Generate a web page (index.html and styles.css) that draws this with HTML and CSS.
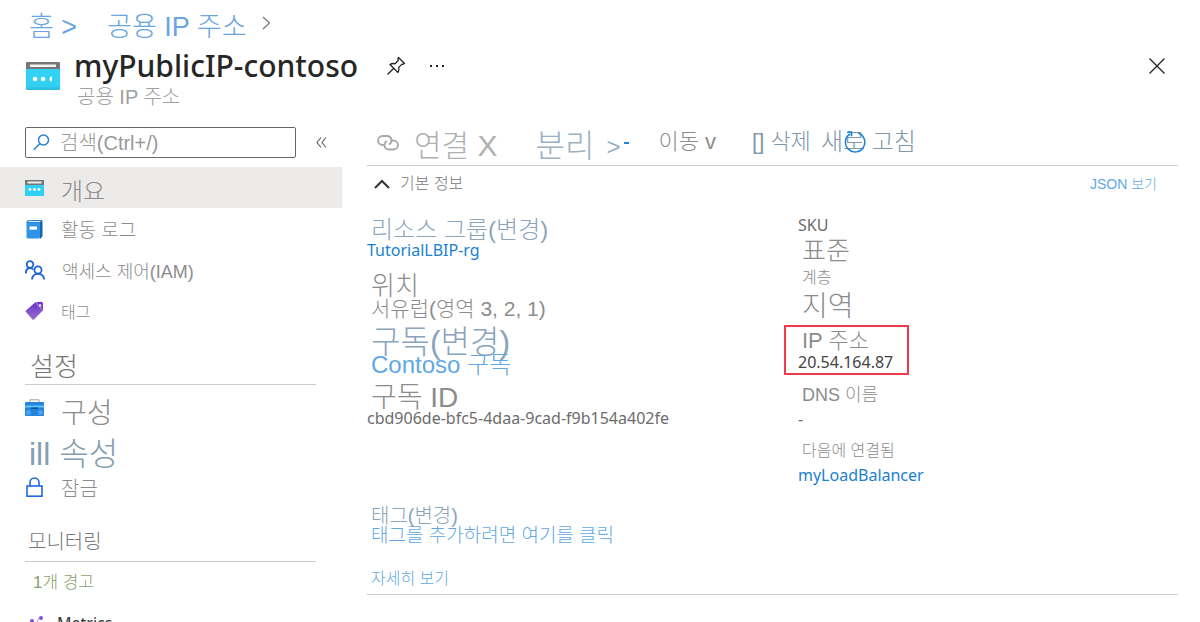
FILE: index.html
```html
<!DOCTYPE html>
<html lang="ko">
<head>
<meta charset="utf-8">
<title>myPublicIP-contoso</title>
<link rel="stylesheet" href="styles.css">
</head>
<body>
<div class="page">
  <header class="header">
    <nav class="crumbs t27">
      <a href="#">홈 &gt;</a>
      <a href="#">공용 IP 주소</a>
      <svg class="crumb-arrow" width="9" height="14" viewBox="0 0 9 14"><path d="M1 1l6.500 6L1 13" fill="none" stroke="#777" stroke-width="1.200"/></svg>
    </nav>
    <div class="title-row">
      <svg class="res-icon" width="34" height="28" viewBox="0 0 34 28"><defs><linearGradient id="cy" x1="0" y1="0" x2="0" y2="1"><stop offset="0" stop-color="#32d4f5"/><stop offset=".8" stop-color="#32d0f2"/><stop offset="1" stop-color="#2bb8da"/></linearGradient></defs><path d="M0 7h34v20a1 1 0 0 1-1 1H1a1 1 0 0 1-1-1z" fill="url(#cy)"/><path d="M1 0h32a1 1 0 0 1 1 1v6H0V1a1 1 0 0 1 1-1z" fill="#767676"/><rect x="4" y="2.500" width="26" height="2.500" fill="#f4f4f4"/><circle cx="9" cy="17" r="2.300" fill="#fff"/><circle cx="17" cy="17" r="2.300" fill="#fff"/><path d="M26 14.500a2.500 2.500 0 1 0 0 5z" fill="#fff"/></svg>
      <div class="titles">
        <h1>myPublicIP-contoso</h1>
        <p class="subtitle t20">공용 IP 주소</p>
      </div>
      <button class="icon-btn pin" aria-label="고정"><svg width="20" height="20" viewBox="0 0 20 20" fill="none" stroke="#222" stroke-width="1.300" stroke-linejoin="round"><path d="M12.500 1.500l6 6-1.500.800-1-.200-3.300 3.300c.5 1.800.3 3.600-.7 5.100L4 8.500c1.500-1 3.300-1.200 5-.700l3.200-3.300-.300-1.400zM7.500 12.500L1.500 18.500"/></svg></button>
      <button class="icon-btn more" aria-label="더 보기"><svg width="14" height="4" viewBox="0 0 14 4" fill="#222"><path d="M0 1h2v2H0zM6 1h2v2H6zM12 1h2v2h-2z"/></svg></button>
      <button class="icon-btn close" aria-label="닫기"><svg width="16" height="16" viewBox="0 0 16 16"><path d="M.5.500l15 15M15.500.500l-15 15" stroke="#222" stroke-width="1.300"/></svg></button>
    </div>
  </header>

  <aside class="side">
    <div class="search-row">
      <label class="search">
        <svg width="17" height="17" viewBox="0 0 17 17" fill="none" stroke="#2a7fd0" stroke-width="1.500"><circle cx="10.500" cy="6" r="5"/><path d="M7 9.500L.8 15.800"/></svg>
        <input class="t20" type="text" aria-label="검색" placeholder="검색(Ctrl+/)">
      </label>
      <button class="icon-btn collapse" aria-label="접기"><svg width="11" height="11" viewBox="0 0 11 11" fill="none" stroke="#666" stroke-width="1.200"><path d="M5 .5l-4 5 4 5M10 .5l-4 5 4 5"/></svg></button>
    </div>
    <ul class="nav">
      <li><a class="item active t24" href="#"><svg width="19" height="16" viewBox="0 0 19 16"><path d="M0 4h19v12H0z" fill="#2fd0f1"/><path d="M0 0h19v5H0z" fill="#767676"/><path d="M2.500 1.500h14v2h-14z" fill="#eee"/><g fill="#fff"><circle cx="5" cy="9.500" r="1.400"/><circle cx="9.500" cy="9.500" r="1.400"/><circle cx="14" cy="9.500" r="1.400"/></g></svg><span>개요</span></a></li>
      <li><a class="item t19" href="#"><svg width="19" height="20" viewBox="0 0 19 20"><path d="M3 1h13a1.500 1.500 0 0 1 1.500 1.500v15L15 20V3z" fill="#1565ab"/><rect x="1.500" y="2.500" width="13.500" height="17" rx="1.500" fill="#2f94e4"/><path d="M1.500 4A2.500 2.500 0 0 1 4 1.200h12.500L15 3.500H2z" fill="#2c80c8"/><path d="M4 2h12l-1 1H3z" fill="#dfe9f2"/><rect x="4.500" y="7.500" width="7.500" height="3.200" fill="#fff"/></svg>활동 로그</a></li>
      <li><a class="item t18" href="#"><svg width="20" height="20" viewBox="0 0 20 20" fill="none" stroke="#1b64d8" stroke-width="1.800"><circle cx="5" cy="4.500" r="3.300"/><path d="M.900 13.500C.900 10 2.500 8 5 8c1.500 0 2.500.600 3.300 1.500"/><circle cx="13" cy="10" r="3.600"/><path d="M7 19.500c.3-3.500 2.500-5.700 6-5.700s5.800 2.200 6.200 5.700"/></svg>액세스 제어(IAM)</a></li>
      <li><a class="item t16" href="#"><svg width="19" height="19" viewBox="0 0 19 19"><defs><linearGradient id="pu" x1="0" y1="0" x2="0" y2="1"><stop offset="0" stop-color="#6d2fd0"/><stop offset="1" stop-color="#9a70c8"/></linearGradient></defs><path d="M10 1.500L16 .800a2 2 0 0 1 2 2v6.500l-9 9.200a1 1 0 0 1-1.500 0L1 11a1 1 0 0 1 0-1.400z" fill="url(#pu)"/><path d="M10.500 1.500l6.500 7" stroke="#b795e6"/><circle cx="15" cy="4.500" r="1.400" fill="#d9c6f2"/></svg>태그</a></li>
    </ul>
    <h2 class="section t26">설정</h2>
    <ul class="nav settings">
      <li><a class="item config t28" href="#"><svg width="19" height="17" viewBox="0 0 19 17"><path d="M5 4V1.500A1 1 0 0 1 6 .800h7a1 1 0 0 1 1 .700V4" fill="none" stroke="#bbb" stroke-width="1.500"/><rect y="3" width="19" height="14" rx="1" fill="#2585dc"/><path d="M0 6.500h19v2H0z" fill="#5fc2fa"/><path d="M6 8.500h7v1.500H6z" fill="#0b5192"/><circle cx="3.500" cy="13.500" r="2.500" fill="#4ba3ee"/><circle cx="15.500" cy="13.500" r="2.500" fill="#4ba3ee"/></svg>구성</a></li>
      <li><a class="item props t32" href="#">ill 속성</a></li>
      <li><a class="item lock t20" href="#"><svg width="19" height="20" viewBox="0 0 19 20" fill="none" stroke="#1f6ae0" stroke-width="1.600"><rect x="2" y="9" width="15" height="10.200"/><path d="M5 9V5.500C5 3 6.800 1 9.500 1S14 3 14 5.500V9"/></svg>잠금</a></li>
    </ul>
    <h2 class="section monitor t20">모니터링</h2>
    <ul class="nav monitoring">
      <li><a class="item alert t17" href="#">1개 경고</a></li>
      <li><a class="item metrics t16" href="#"><svg width="19" height="18" viewBox="0 0 19 18"><path d="M7 8l3 4 4-8" fill="none" stroke="#b58cf0"/><g fill="#8b49e8"><circle cx="7" cy="7" r="2"/><circle cx="16" cy="4" r="2"/><circle cx="10" cy="13" r="2"/></g></svg>Metrics</a></li>
    </ul>
  </aside>

  <main class="main">
    <div class="toolbar">
      <button class="tool attach t30"><svg width="22" height="16" viewBox="0 0 22 16" fill="none" stroke="#aaa" stroke-width="1.900"><path d="M8 10H5.500a4.500 4.500 0 0 1 0-9h5a4.500 4.500 0 0 1 1.500 8.500"/><path d="M14 5.500h2.500a4.500 4.500 0 0 1 0 9h-5a4.500 4.500 0 0 1-1.500-8.500"/></svg>연결 X</button>
      <button class="tool detach t32">분리</button>
      <button class="tool into t24">&gt;<span class="dash"></span></button>
      <button class="tool move t22">이동 <span>v</span></button>
      <button class="tool remove t22">[] 삭제</button>
      <button class="tool refresh t24">새로 고침<svg class="spin" width="22" height="22" viewBox="0 0 22 22" fill="none" stroke="#1a84d8" stroke-width="1.500"><path d="M6 3A9.700 9.700 0 1 0 14 2"/><path d="M3.500 1.200h4v4" stroke-width="1.800"/></svg></button>
    </div>
    <div class="essentials">
      <button class="toggle t16"><svg width="16" height="10" viewBox="0 0 16 10"><path d="M1 9l7-7 7 7" fill="none" stroke="#333" stroke-width="2"/></svg>기본 정보</button>
      <a class="json t14" href="#">JSON 보기</a>
    </div>
    <div class="details">
      <dl class="left">
        <div><dt class="t24 slate">리소스 그룹(변경)</dt><dd><a class="latin" href="#">TutorialLBIP-rg</a></dd></div>
        <div><dt class="t26">위치</dt><dd class="t21">서유럽(영역 3, 2, 1)</dd></div>
        <div><dt class="t32 slate">구독(변경)</dt><dd class="t24"><a href="#">Contoso 구독</a></dd></div>
        <div><dt class="t28">구독 ID</dt><dd class="latin">cbd906de-bfc5-4daa-9cad-f9b154a402fe</dd></div>
      </dl>
      <dl class="right">
        <div><dt class="latin">SKU</dt><dd class="t26">표준</dd></div>
        <div><dt class="t16">계층</dt><dd class="t28">지역</dd></div>
        <div class="marked"><dt class="t22">IP 주소</dt><dd class="latin dark">20.54.164.87</dd></div>
        <div><dt class="t18">DNS 이름</dt><dd class="latin">-</dd></div>
        <div><dt class="t16">다음에 연결됨</dt><dd><a class="latin" href="#">myLoadBalancer</a></dd></div>
      </dl>
    </div>
    <div class="tags">
      <p class="t20 slate">태그(변경)</p>
      <a class="t19" href="#">태그를 추가하려면 여기를 클릭</a>
    </div>
    <a class="see-more t16" href="#">자세히 보기</a>
  </main>
</div>
</body>
</html>
```
FILE: styles.css
```css
* { box-sizing: border-box; }
body, h1, h2, p, ul, dl, dt, dd { margin: 0; padding: 0; font-weight: 300; }
body {
  background: #fff;
  color: #8c8c8c;
  font-family: "Liberation Sans", "Noto Sans CJK KR", sans-serif;
}
ul { list-style: none; }
a { color: #5fa8e4; text-decoration: none; }
button {
  font-family: inherit;
  font-weight: 300;
  color: inherit;
  background: none;
  border: 0;
  padding: 0;
  white-space: nowrap;
}
svg { display: block; flex: none; }

.t14 { font-size: 14px; }
.t16 { font-size: 16px; }
.t17 { font-size: 17px; }
.t18 { font-size: 18px; }
.t19 { font-size: 19px; }
.t20 { font-size: 20px; }
.t21 { font-size: 21px; }
.t22 { font-size: 22px; }
.t24 { font-size: 24px; }
.t26 { font-size: 26px; }
.t27 { font-size: 27px; }
.t28 { font-size: 28px; }
.t30 { font-size: 30px; }
.t32 { font-size: 32px; }
.slate { color: #8aa5bb; }

.page {
  display: grid;
  grid-template-columns: 342px 1fr;
  grid-template-rows: auto 1fr;
  column-gap: 25px;
  height: 100vh;
  overflow: hidden;
}

.header { grid-column: 1 / -1; padding: 12px 35px 0 25px; }
.crumbs { display: flex; gap: 30px; padding-left: 4px; line-height: 30px; }
.crumbs a { color: #6aa5e0; }
.crumb-arrow { margin: 4px 0 0 -15px; }
.title-row { display: flex; align-items: flex-start; padding-top: 4px; }
.res-icon { margin: 16px 14px 0 1px; }
h1 {
  color: #262626;
  font: 500 30px/40px "Noto Sans", sans-serif;
}
.subtitle { padding-left: 3px; line-height: 22px; color: #a0a0a0; }
.icon-btn { display: flex; align-items: center; height: 40px; }
.pin { margin-left: 28px; }
.more { margin-left: 24px; }
.close { margin-left: auto; }

.side { padding-top: 19px; }
.search-row { display: flex; align-items: center; gap: 20px; padding-left: 25px; }
.search {
  display: flex;
  align-items: center;
  gap: 10px;
  width: 271px;
  height: 31px;
  padding: 0 7px;
  border: 1px solid #666;
  border-radius: 2px;
}
.search input {
  flex: 1;
  min-width: 0;
  padding: 2px 0 0;
  border: 0;
  outline: 0;
  background: none;
  font-family: inherit;
  font-weight: 300;
}
.search input::placeholder { color: #999; }
.collapse { height: 31px; }

.nav { padding-top: 9px; }
.item {
  display: flex;
  align-items: center;
  gap: 17px;
  height: 41px;
  padding-left: 25px;
  color: #8c8c8c;
  white-space: nowrap;
}
.active { background: #edebe9; }
.active span { padding-top: 4px; }
.section {
  margin: 20px 26px 0 25px;
  padding-left: 5px;
  border-bottom: 1px solid #ccc;
  line-height: 33px;
  color: #777;
}
.settings { padding-top: 6px; }
.settings .item { height: 40px; }
.config svg { margin-bottom: 8px; }
.settings .props { padding-left: 29px; color: #84a0b0; }
.settings .lock { height: 32px; }
.monitor { margin-top: 20px; padding-left: 3px; line-height: 38px; }
.monitoring { padding-top: 0; }
.monitoring .alert { height: 36px; padding-left: 33px; color: #8aa070; }
.monitoring .metrics { height: 50px; gap: 13px; color: #333; font-family: "Noto Sans", sans-serif; font-weight: 400; }

.main { padding: 20px 22px 0 0; }
.toolbar {
  display: flex;
  align-items: flex-start;
  border-bottom: 1px solid #ccc;
  height: 38px;
}
.tool { line-height: 28px; }
.attach { display: flex; gap: 15px; padding-left: 10px; color: #b0b0b0; line-height: 36px; }
.attach svg { margin-top: 7px; }
.detach { margin-left: 38px; color: #9db0c0; line-height: 36px; }
.into { display: flex; margin-left: 12px; color: #9db0c0; line-height: 38px; }
.dash { width: 5px; height: 2px; margin: 14px 0 0 4px; background: #1a84d8; }
.move { margin-left: 29px; }
.remove { margin-left: 36px; color: #8098ac; }
.refresh { position: relative; margin-left: 10px; color: #8098ac; }
.spin { position: absolute; left: 23px; top: 3px; }
.essentials { display: flex; justify-content: space-between; padding: 0 21px 0 7px; line-height: 36px; }
.toggle { display: flex; align-items: center; gap: 10px; color: #777; line-height: 34px; }

.details { display: grid; grid-template-columns: 431px 1fr; padding-top: 11px; }
.left { padding-top: 5px; }
.left > div { height: 56px; }
dt { padding-left: 4px; line-height: 24px; white-space: nowrap; }
dd { padding-left: 4px; line-height: 22px; white-space: nowrap; }
dd:has(.latin), .latin {
  padding-left: 0;
  font-family: "Noto Sans", sans-serif;
  font-size: 16px;
  font-weight: 400;
  line-height: 16px;
}
dd.latin, dt.latin { color: #6c6c6c; }
a.latin { color: #1a80d2; }
.right { display: flex; flex-direction: column; gap: 8px; }
.right dt, .right dd { line-height: 24px; }
.right > div:first-child dd { padding-top: 2px; }
.right > div:nth-child(2) { margin-top: -5px; }
.right > div:nth-child(2) dd { padding-top: 5px; }
.right dd.dark { color: #444; line-height: 22px; }
.marked {
  align-self: flex-start;
  margin: -2px 0 0 -14px;
  padding: 4px 14px 0 12px;
  border: 2px solid #f23a4e;
}
.right .marked dt { line-height: 20px; }

.tags { padding: 19px 0 0 4px; line-height: 20px; }
.tags a { display: block; }
.see-more {
  display: block;
  padding: 17px 0 0 4px;
  border-bottom: 1px solid #ccc;
  line-height: 31px;
}
```
